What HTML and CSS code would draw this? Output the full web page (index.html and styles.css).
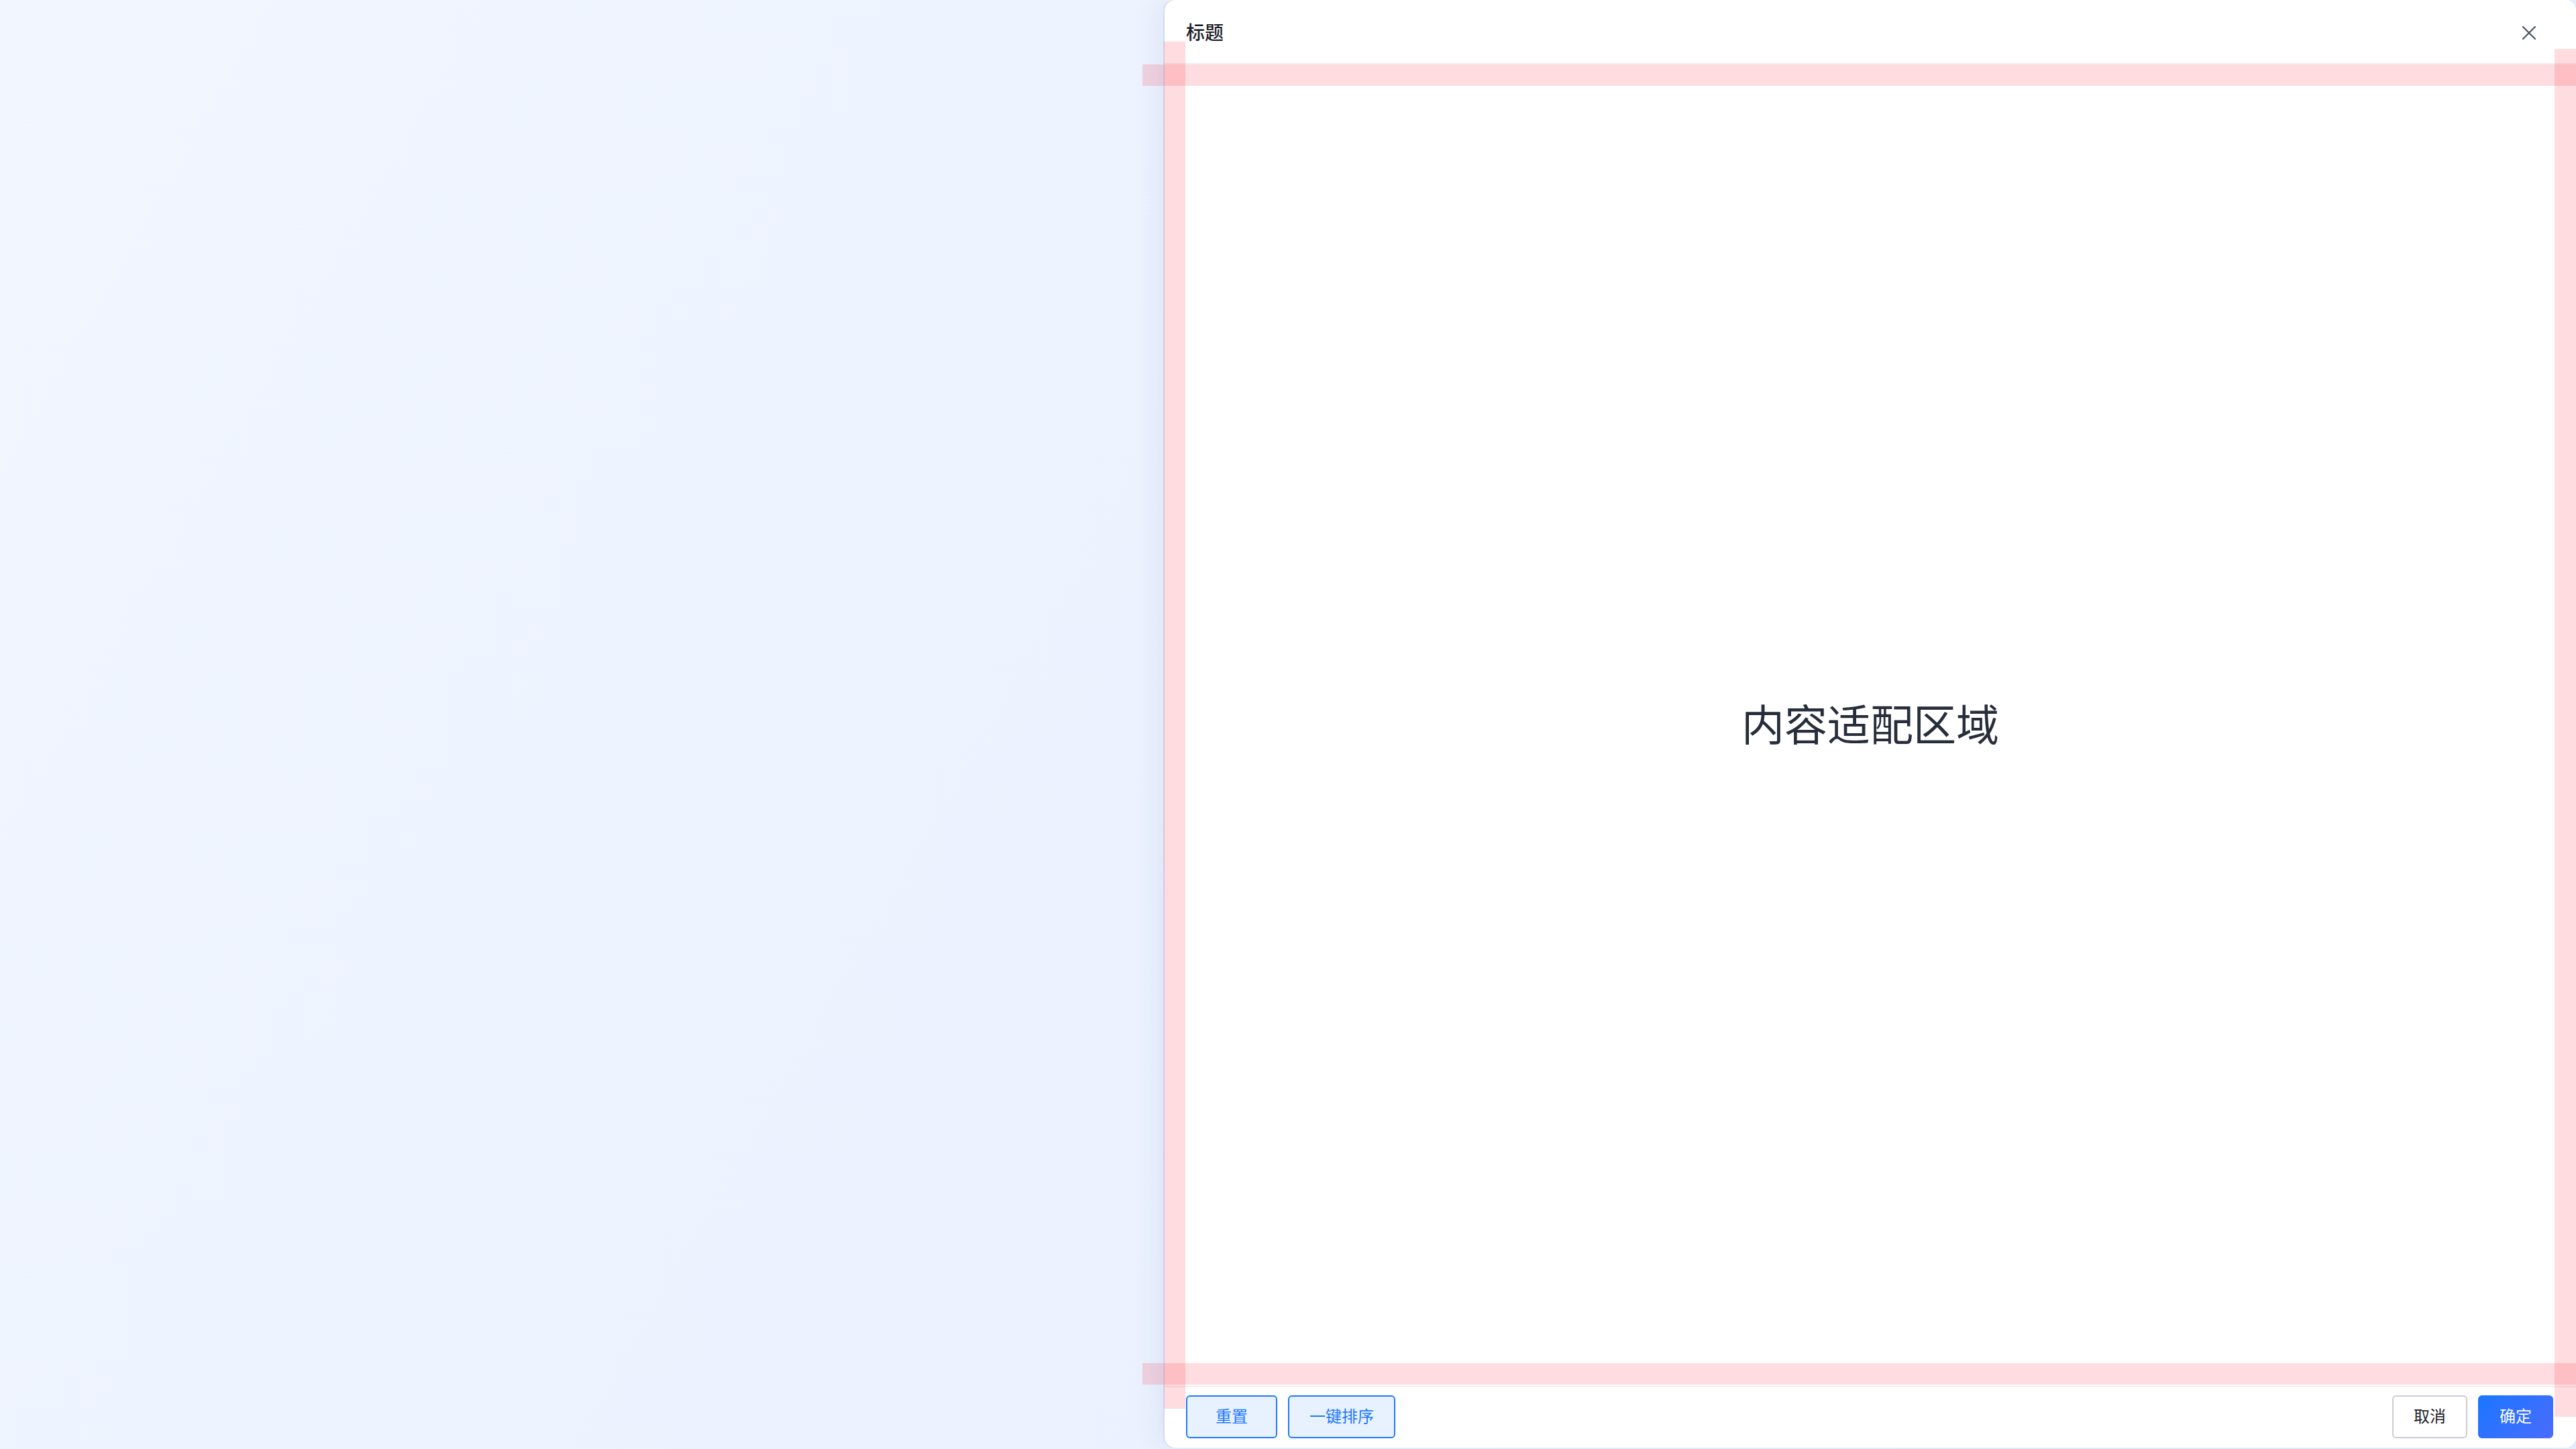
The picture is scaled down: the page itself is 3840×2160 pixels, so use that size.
FILE: index.html
```html
<!DOCTYPE html>
<html lang="zh-CN">
<head>
<meta charset="utf-8">
<title>标题</title>
<link rel="stylesheet" href="styles.css">
</head>
<body>
<div class="page">
  <div class="backdrop"></div>
  <div class="drawer">
    <div class="drawer-header">
      <span class="drawer-title">标题</span>
      <span class="close-btn">
        <svg viewBox="0 0 24 24" width="24" height="24"><path d="M3 3 L21 21 M21 3 L3 21" stroke="#4e5969" stroke-width="2.4" stroke-linecap="round" fill="none"/></svg>
      </span>
    </div>
    <div class="drawer-body">
      <span class="body-text">内容适配区域</span>
    </div>
    <div class="drawer-footer">
      <div class="footer-group">
        <button class="btn btn-light btn-reset">重置</button>
        <button class="btn btn-light btn-sort">一键排序</button>
      </div>
      <div class="footer-group">
        <button class="btn btn-default">取消</button>
        <button class="btn btn-primary">确定</button>
      </div>
    </div>
  </div>
  <div class="guide guide-h guide-top"></div>
  <div class="guide guide-h guide-bottom"></div>
  <div class="guide guide-v guide-left"></div>
  <div class="guide guide-v guide-right"></div>
</div>
</body>
</html>
```
FILE: styles.css
```css
html, body {
  margin: 0;
  padding: 0;
}
body {
  width: 3840px;
  height: 2160px;
  overflow: hidden;
  font-family: "Noto Sans CJK SC", "Noto Sans", sans-serif;
}
.page {
  position: relative;
  width: 3840px;
  height: 2160px;
  display: flex;
  background: linear-gradient(120deg, #f1f6ff 0%, #ecf2ff 50%, #e8effd 100%);
}
.backdrop {
  flex: 1;
}
.drawer {
  width: 2104px;
  height: 2158px;
  background: #fff;
  border-radius: 16px;
  display: flex;
  flex-direction: column;
  box-shadow: -2px 0 0 rgba(180, 190, 215, 0.35), -10px 0 40px rgba(40, 60, 120, 0.08);
}
.drawer-header {
  height: 94px;
  border-bottom: 2px solid #efeff2;
  display: flex;
  align-items: center;
  justify-content: space-between;
  padding: 0 58px 0 32px;
}
.drawer-title {
  font-size: 28px;
  font-weight: 500;
  color: #1d2129;
  line-height: 1;
  margin-top: 0;
}
.close-btn {
  width: 24px;
  height: 24px;
  display: flex;
  margin-top: 4px;
}
.drawer-body {
  flex: 1;
  display: flex;
  align-items: center;
  justify-content: center;
  padding-bottom: 10px;
}
.body-text {
  font-size: 64px;
  color: #272e3b;
  line-height: 1;
}
.drawer-footer {
  border-top: 2px solid #efeff2;
  height: 92px;
  box-sizing: border-box;
  padding: 12px 34px 0 32px;
  display: flex;
  justify-content: space-between;
  align-items: flex-start;
}
.footer-group {
  display: flex;
  gap: 16px;
}
.btn {
  height: 64px;
  box-sizing: border-box;
  border-radius: 6px;
  font-family: "Noto Sans CJK SC", "Noto Sans", sans-serif;
  font-size: 24px;
  line-height: 1;
  padding: 0 0 4px 0;
  display: flex;
  align-items: center;
  justify-content: center;
}
.btn-light {
  border: 2px solid #1f78ff;
  background: #e8f2ff;
  color: #1f78ff;
}
.btn-reset {
  width: 136px;
}
.btn-sort {
  width: 160px;
}
.btn-default {
  width: 112px;
  border: 2px solid #c9cdd4;
  background: #fff;
  color: #1d2129;
}
.btn-primary {
  width: 112px;
  border: none;
  background: linear-gradient(135deg, #1b76ff 0%, #4a6bff 100%);
  color: #fff;
}
.guide {
  position: absolute;
  background: rgba(250, 60, 80, 0.18);
  pointer-events: none;
}
.guide-h {
  left: 1703px;
  right: 0;
  height: 32px;
}
.guide-top {
  top: 96px;
}
.guide-bottom {
  top: 2032px;
}
.guide-v {
  width: 32px;
}
.guide-left {
  left: 1735px;
  top: 62px;
  height: 2038px;
}
.guide-right {
  left: 3808px;
  top: 73px;
  height: 2039px;
}
```
